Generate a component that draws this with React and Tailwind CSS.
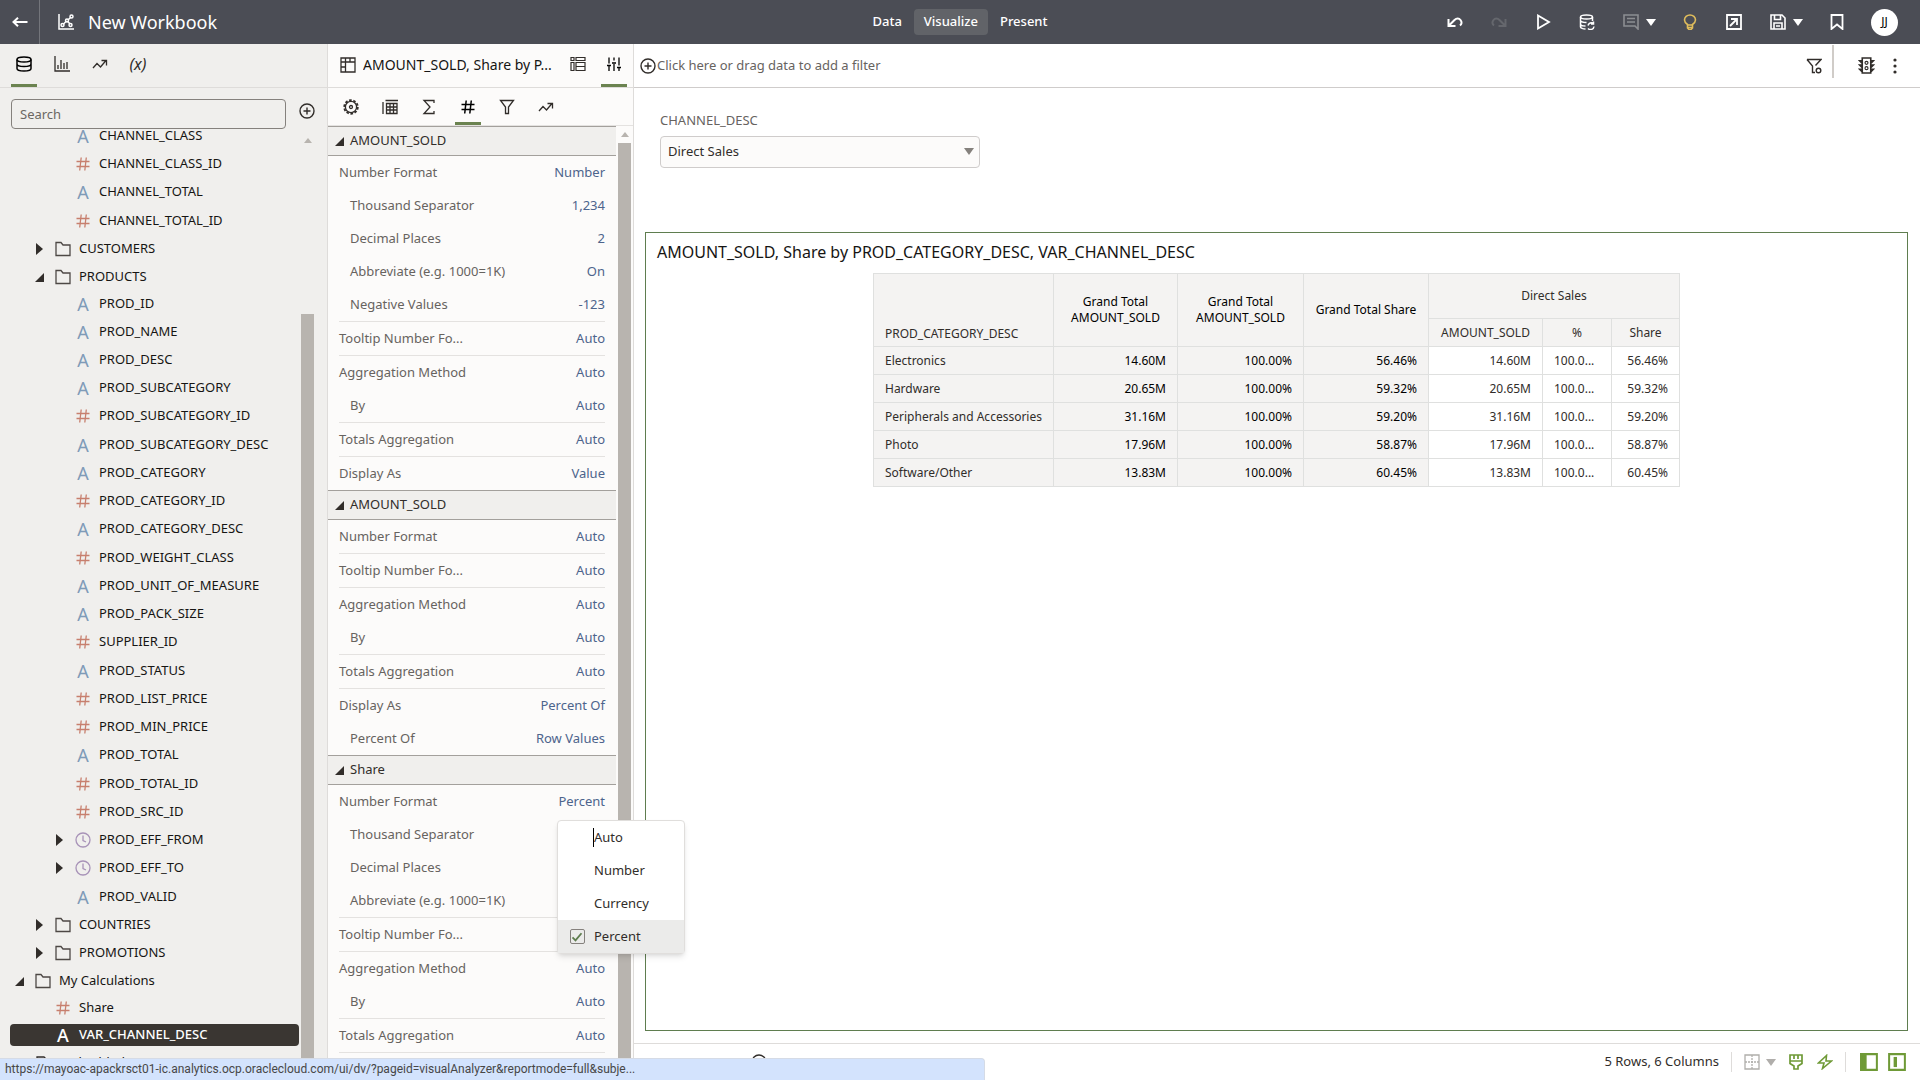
import { useState } from 'react'

const tree = [
  { level: 2, kind: 'text', label: 'CHANNEL_CLASS' },
  { level: 2, kind: 'number', label: 'CHANNEL_CLASS_ID' },
  { level: 2, kind: 'text', label: 'CHANNEL_TOTAL' },
  { level: 2, kind: 'number', label: 'CHANNEL_TOTAL_ID' },
  { level: 1, kind: 'folder', label: 'CUSTOMERS', arrow: 'closed' },
  { level: 1, kind: 'folder', label: 'PRODUCTS', arrow: 'open' },
  { level: 2, kind: 'text', label: 'PROD_ID', first: true },
  { level: 2, kind: 'text', label: 'PROD_NAME' },
  { level: 2, kind: 'text', label: 'PROD_DESC' },
  { level: 2, kind: 'text', label: 'PROD_SUBCATEGORY' },
  { level: 2, kind: 'number', label: 'PROD_SUBCATEGORY_ID' },
  { level: 2, kind: 'text', label: 'PROD_SUBCATEGORY_DESC' },
  { level: 2, kind: 'text', label: 'PROD_CATEGORY' },
  { level: 2, kind: 'number', label: 'PROD_CATEGORY_ID' },
  { level: 2, kind: 'text', label: 'PROD_CATEGORY_DESC' },
  { level: 2, kind: 'number', label: 'PROD_WEIGHT_CLASS' },
  { level: 2, kind: 'text', label: 'PROD_UNIT_OF_MEASURE' },
  { level: 2, kind: 'text', label: 'PROD_PACK_SIZE' },
  { level: 2, kind: 'number', label: 'SUPPLIER_ID' },
  { level: 2, kind: 'text', label: 'PROD_STATUS' },
  { level: 2, kind: 'number', label: 'PROD_LIST_PRICE' },
  { level: 2, kind: 'number', label: 'PROD_MIN_PRICE' },
  { level: 2, kind: 'text', label: 'PROD_TOTAL' },
  { level: 2, kind: 'number', label: 'PROD_TOTAL_ID' },
  { level: 2, kind: 'number', label: 'PROD_SRC_ID' },
  { level: 2, kind: 'time', label: 'PROD_EFF_FROM', arrow: 'closed' },
  { level: 2, kind: 'time', label: 'PROD_EFF_TO', arrow: 'closed' },
  { level: 2, kind: 'text', label: 'PROD_VALID' },
  { level: 1, kind: 'folder', label: 'COUNTRIES', arrow: 'closed' },
  { level: 1, kind: 'folder', label: 'PROMOTIONS', arrow: 'closed' },
  { level: 0, kind: 'folder', label: 'My Calculations', arrow: 'open' },
  { level: 1, kind: 'number', label: 'Share', first: true },
  { level: 1, kind: 'text', label: 'VAR_CHANNEL_DESC', selected: true },
  { level: 0, kind: 'file', label: 'Embedded' },
]

const sections = [
  {
    title: 'AMOUNT_SOLD',
    groups: [
      [
        ['Number Format', 'Number'],
        ['Thousand Separator', '1,234', true],
        ['Decimal Places', '2', true],
        ['Abbreviate (e.g. 1000=1K)', 'On', true],
        ['Negative Values', '-123', true],
      ],
      [['Tooltip Number Fo...', 'Auto']],
      [['Aggregation Method', 'Auto'], ['By', 'Auto', true]],
      [['Totals Aggregation', 'Auto']],
      [['Display As', 'Value']],
    ],
  },
  {
    title: 'AMOUNT_SOLD',
    groups: [
      [['Number Format', 'Auto']],
      [['Tooltip Number Fo...', 'Auto']],
      [['Aggregation Method', 'Auto'], ['By', 'Auto', true]],
      [['Totals Aggregation', 'Auto']],
      [['Display As', 'Percent Of'], ['Percent Of', 'Row Values', true]],
    ],
  },
  {
    title: 'Share',
    groups: [
      [
        ['Number Format', 'Percent'],
        ['Thousand Separator', '', true],
        ['Decimal Places', '', true],
        ['Abbreviate (e.g. 1000=1K)', '', true],
      ],
      [['Tooltip Number Fo...', '']],
      [['Aggregation Method', 'Auto'], ['By', 'Auto', true]],
      [['Totals Aggregation', 'Auto']],
    ],
  },
]

const rows = [
  ['Electronics', '14.60M', '56.46%'],
  ['Hardware', '20.65M', '59.32%'],
  ['Peripherals and Accessories', '31.16M', '59.20%'],
  ['Photo', '17.96M', '58.87%'],
  ['Software/Other', '13.83M', '60.45%'],
]

const formats = ['Auto', 'Number', 'Currency', 'Percent']

const paddings = ['pl-px', 'pl-[21px]', 'pl-[41px]']

function Icon({ children, className = 'size-4', width = 1.3 }) {
  return (
    <svg
      viewBox="0 0 16 16"
      className={`shrink-0 ${className}`}
      fill="none"
      stroke="currentColor"
      strokeWidth={width}
      aria-hidden
    >
      {children}
    </svg>
  )
}

function Caret({ className = '' }) {
  return (
    <svg viewBox="0 0 10 7" className={`h-[7px] w-2.5 shrink-0 ${className}`} fill="currentColor" aria-hidden>
      <path d="M0 0h10L5 7z" />
    </svg>
  )
}

function Hash({ className = 'size-4', width = 1.3 }) {
  return (
    <Icon className={className} width={width}>
      <path d="M6.2 1.5 4.7 14.5M11.3 1.5l-1.5 13M1.5 5.500h13M1.5 10.500h13" />
    </Icon>
  )
}

function Trend() {
  return (
    <Icon>
      <path d="M1 12l4-4.5L8.500 11l5.500-6.500M9.500 4.500h5v5" />
    </Icon>
  )
}

function PlusCircle({ className = 'size-4' }) {
  return (
    <Icon className={className} width={1.4}>
      <circle cx="8" cy="8" r="7" />
      <path d="M8 4.5v7M4.5 8h7" />
    </Icon>
  )
}

function Arrow({ state }) {
  return (
    <span className="flex w-4 shrink-0 justify-center text-[#312d2a]">
      {state === 'closed' && (
        <svg viewBox="0 0 7 12" className="h-3 w-[7px]" fill="currentColor" aria-hidden>
          <path d="M0 0l7 6-7 6z" />
        </svg>
      )}
      {state === 'open' && (
        <svg viewBox="0 0 10 10" className="size-[9px]" fill="currentColor" aria-hidden>
          <path d="M10 0v10H0z" />
        </svg>
      )}
    </span>
  )
}

function KindIcon({ kind, selected }) {
  if (kind === 'number') return <Hash className="size-4 text-[#c77f6e]" />
  if (kind === 'text') {
    return (
      <span
        className={`w-4 shrink-0 text-center text-lg leading-5 ${selected ? 'text-white' : 'text-[#7f9bb8]'}`}
        aria-hidden
      >
        A
      </span>
    )
  }
  if (kind === 'time') {
    return (
      <Icon className="size-4 text-[#a893b8]">
        <circle cx="8" cy="8" r="7" />
        <path d="M8 3.5V8.5l3 1.5" />
      </Icon>
    )
  }
  if (kind === 'file') {
    return (
      <Icon className="size-4 text-[#312d2a]">
        <path d="M2 15V2h7l5 5v8zM6 15V8h4" />
      </Icon>
    )
  }
  return (
    <Icon className="size-4 text-[#4d4845]">
      <path d="M1 14.500V1.500h5l2 2.500h7v10.500z" />
    </Icon>
  )
}

function Tab({ label, active, className = '', children }) {
  return (
    <button
      type="button"
      aria-label={label}
      className={`flex w-[26px] items-center justify-center border-b-3 ${className} ${
        active ? 'border-[#6b8350] text-black' : 'border-transparent text-[#312d2a]'
      }`}
    >
      {children}
    </button>
  )
}

function HeaderButton({ label, className = 'text-white', children }) {
  return (
    <button type="button" aria-label={label} className={`flex items-center gap-[7px] ${className}`}>
      {children}
    </button>
  )
}

function Header() {
  return (
    <header className="grid h-11 shrink-0 grid-cols-[1fr_auto_1fr] items-center bg-[#4b4d55] text-white">
      <div className="flex h-full items-center">
        <button
          type="button"
          aria-label="Back"
          className="flex h-full w-10 items-center justify-center border-r border-[#73757b]"
        >
          <Icon className="size-4" width={2}>
            <path d="M15.500 8H1.500M6 3.800L1.500 8 6 12.200" />
          </Icon>
        </button>
        <Icon className="ml-[18px] size-4" width={1.5}>
          <path d="M1 0v15h15M5.500 10l3-3M10 6l2.500-2.500M9.500 7l2.500 3" />
          <circle cx="4.500" cy="11" r="1.500" />
          <circle cx="9" cy="6.500" r="1.500" />
          <circle cx="13.500" cy="2.500" r="1.500" />
          <circle cx="12.500" cy="11" r="1.500" />
        </Icon>
        <h1 className="ml-3.5 text-lg">New Workbook</h1>
      </div>
      <nav className="flex items-center text-[13px] font-medium">
        <button type="button" className="h-[26px] px-3">Data</button>
        <button type="button" className="h-[26px] rounded bg-[#616368] px-2.5">Visualize</button>
        <button type="button" className="h-[26px] px-3">Present</button>
      </nav>
      <div className="flex items-center justify-end gap-7 pr-[22px]">
        <HeaderButton label="Undo">
          <Icon width={2}>
            <path d="M1.500 5v7h7M2 11.500L7.500 6c2-2 4.500-2 6 0s1.500 4-.5 5.500" />
          </Icon>
        </HeaderButton>
        <HeaderButton label="Redo" className="text-[#65676d]">
          <Icon width={2}>
            <path d="M14.500 5v7h-7M14 11.500L8.500 6c-2-2-4.500-2-6 0s-1.500 4 .5 5.500" />
          </Icon>
        </HeaderButton>
        <HeaderButton label="Run">
          <Icon width={1.8}>
            <path d="M3 1.500v13L14 8z" />
          </Icon>
        </HeaderButton>
        <HeaderButton label="Refresh data">
          <Icon width={1.5}>
            <ellipse cx="7.500" cy="3" rx="6" ry="2" />
            <path d="M1.500 3v10c0 1 2.500 2 5 2M13.500 3v4M1.500 6.500c0 1 2.500 2 6 2M1.500 10c0 1 2 2 5 2M14.500 9.500a3.500 3.500 0 0 0-5.500 2M9 14.500a3.500 3.500 0 0 0 6-2M14.500 7.500v2.500h-2.500" />
          </Icon>
        </HeaderButton>
        <HeaderButton label="Comments" className="-mr-0.5 text-[#8c8e92]">
          <Icon width={1.6}>
            <path d="M1 1h14v14l-3-3H1zM4 4.500h8M4 8h8" />
          </Icon>
          <Caret className="text-white" />
        </HeaderButton>
        <HeaderButton label="Insights" className="text-[#e0bd5c]">
          <Icon width={1.6}>
            <path d="M5.500 10.500C3.500 9 2.500 7.500 2.500 6a5.500 5 0 0 1 11 0c0 1.500-1 3-3 4.500v3.500l-1.500 1.500h-2l-1.500-1.500zM5.500 11h5M5.500 13.500h5" />
          </Icon>
        </HeaderButton>
        <HeaderButton label="Export">
          <Icon width={1.8}>
            <path d="M1 1h14v14H1zM4 12l6.500-6.500M5 5h6v6" />
          </Icon>
        </HeaderButton>
        <HeaderButton label="Save" className="-mr-0.5 text-white">
          <Icon width={1.6}>
            <path d="M1 1h11l3 3v11H1zM4.500 1v4.500h6V1M4 15V9h8v6M6 12h4" />
          </Icon>
          <Caret />
        </HeaderButton>
        <HeaderButton label="Bookmark" className="-mr-0.5 text-white">
          <Icon width={1.8}>
            <path d="M2.500 1h11v14L8 10.500 2.500 15z" />
          </Icon>
        </HeaderButton>
        <button type="button" className="flex size-[27px] items-center justify-center rounded-full bg-white text-xs text-black">
          JJ
        </button>
      </div>
    </header>
  )
}

function DataPanel() {
  return (
    <aside className="flex w-[328px] shrink-0 flex-col border-r border-[#dedcda] bg-[#f0efed]">
      <div className="flex h-11 shrink-0 gap-3 border-b border-[#dedcda] pl-[11px]">
        <Tab label="Data" active>
          <Icon width={1.5}>
            <ellipse cx="8" cy="3.500" rx="7" ry="2.500" />
            <path d="M1 3.500v9C1 14 4 15 8 15s7-1 7-2.500v-9M1 8c0 1.500 3 2.500 7 2.500S15 9.500 15 8" />
          </Icon>
        </Tab>
        <Tab label="Visualizations">
          <Icon>
            <path d="M1 0v15h15M4 13V9M7 13V4M10 13V7M13 13V6" />
          </Icon>
        </Tab>
        <Tab label="Analytics">
          <Trend />
        </Tab>
        <Tab label="Functions">
          <span className="text-base italic leading-4">(x)</span>
        </Tab>
      </div>
      <div className="flex h-[42px] shrink-0 items-start gap-[13px] pl-[11px] pt-[11px]">
        <input
          type="text"
          aria-label="Search"
          placeholder="Search"
          className="h-[30px] w-[275px] rounded border border-[#85817d] bg-transparent px-2 text-[13px] outline-none placeholder:text-[#6b6763]"
        />
        <button type="button" aria-label="Add data" className="mt-1">
          <PlusCircle className="size-4 text-[#312d2a]" />
        </button>
      </div>
      <div className="flex min-h-0 flex-1">
        <ul className="min-w-0 flex-1 overflow-hidden">
          {tree.map((item, i) => (
            <li
              key={item.label}
              className={`flex items-center px-2.5 ${
                i === 0 ? '-mt-2' : ''
              } ${item.first ? 'h-[26px]' : 'h-7 nth-[4n]:h-[29px]'}`}
            >
              <button
                type="button"
                className={`flex h-[22px] w-full items-center gap-2 rounded text-[13px] ${paddings[item.level]} ${
                  item.selected ? 'bg-[#3a3632] font-medium text-white' : 'text-[#161513]'
                }`}
              >
                <Arrow state={item.arrow} />
                <KindIcon kind={item.kind} selected={item.selected} />
                <span className="whitespace-nowrap">{item.label}</span>
              </button>
            </li>
          ))}
        </ul>
        <div className="-ml-2 mr-[13px] flex w-[13px] flex-col items-center">
          <svg viewBox="0 0 8 5" className="mt-2 h-[5px] w-2 text-[#b8b4af]" fill="currentColor" aria-hidden>
            <path d="M4 0l4 5H0z" />
          </svg>
          <div className="mt-[171px] w-full flex-1 bg-[#b8b4af]" />
        </div>
      </div>
    </aside>
  )
}

function FormatMenu() {
  const [value, setValue] = useState('Percent')

  return (
    <ul className="absolute -right-20 top-full z-10 mt-0.5 w-32 rounded border border-[#e0dedc] bg-white shadow-md">
      {formats.map((name) => (
        <li key={name}>
          <label
            className={`flex h-[33px] items-center gap-2 pl-[11px] text-[13px] text-[#312d2a] ${
              value === name ? 'bg-[#ebebea]' : ''
            }`}
          >
            <span className="grid size-4 place-items-center">
              <input
                type="checkbox"
                checked={value === name}
                onChange={() => setValue(name)}
                className="col-start-1 row-start-1 size-[15px] appearance-none rounded-xs border-[#85817d] checked:border"
              />
              {value === name && (
                <Icon className="pointer-events-none col-start-1 row-start-1 size-3 text-[#5f7d4f]" width={2.4}>
                  <path d="M2 8.500l4 4L14 3" />
                </Icon>
              )}
            </span>
            <span className={name === 'Auto' ? 'border-l border-black' : 'border-l border-transparent'}>
              {name}
            </span>
          </label>
        </li>
      ))}
    </ul>
  )
}

function Section({ title, groups, menu }) {
  return (
    <section>
      <button
        type="button"
        className="flex h-[30px] w-full items-center gap-1.5 border-y border-[#a3a09c] bg-[#f0efed] pl-[7px] text-[13px] text-[#312d2a]"
      >
        <svg viewBox="0 0 10 10" className="size-[9px]" fill="currentColor" aria-hidden>
          <path d="M10 0v10H0z" />
        </svg>
        {title}
      </button>
      <div className="divide-y divide-[#e4e2e0] px-[11px]">
        {groups.map((group) => (
          <div key={group[0][0]}>
            {group.map(([label, value, sub]) => (
              <div
                key={label}
                className={`relative flex h-[33px] items-center justify-between text-[13px] ${sub ? 'pl-[11px]' : ''}`}
              >
                <span className="text-[#67635f]">{label}</span>
                {value && <button type="button" className="text-[#4d648c]">{value}</button>}
                {menu && label === 'Number Format' && <FormatMenu />}
              </div>
            ))}
          </div>
        ))}
      </div>
    </section>
  )
}

function PropertiesPanel() {
  return (
    <aside className="z-10 flex w-[306px] shrink-0 flex-col border-r border-[#dedcda] bg-[#fcfbfa]">
      <div className="flex h-11 shrink-0 border-b border-[#dedcda] pl-3 pr-1.5">
        <div className="flex min-w-0 flex-1 items-center gap-[7px] pb-0.5 text-[#312d2a]">
          <Icon>
            <path d="M1 1h14v14H1zM1 5h14M5.500 1v14M10 1v4M1 10h4.500" />
          </Icon>
          <span className="truncate text-sm text-[#161513]">AMOUNT_SOLD, Share by P...</span>
        </div>
        <div className="flex gap-2.5">
          <Tab label="Grammar">
            <Icon width={1.2}>
              <path d="M1 1.500h3v3H1zM6 1.500h9v3H6zM1 6.500h3v8H1zM6 6.500h9v8H6zM6 10.500h9" />
            </Icon>
          </Tab>
          <Tab label="Properties" active>
            <Icon>
              <path d="M3 1.500v6M3 10v5M8 1.500v3M8 8v7M13 1.500v8M13 12v3M1 9.500h4M6 7h4M11 11.500h4" />
            </Icon>
          </Tab>
        </div>
      </div>
      <div className="flex h-[38px] shrink-0 gap-[13px] border-b border-[#e4e2e0] pl-2.5">
        <Tab label="General" className="pt-1">
          <Icon width={1.3}>
            <circle cx="8" cy="8" r="6.800" strokeDasharray="2.600 1.670" strokeWidth="1.800" />
            <circle cx="8" cy="8" r="5.600" />
            <circle cx="8" cy="8" r="1.500" />
          </Icon>
        </Tab>
        <Tab label="Grid" className="pt-1">
          <Icon>
            <path d="M1 3v12M3.500 1.500H16M4.500 4.500h10.500v10H4.500zM4.500 8h10.500M4.500 11h10.500M8 4.500v10M11.500 4.500v10" />
          </Icon>
        </Tab>
        <Tab label="Totals" className="pt-1">
          <Icon>
            <path d="M13 4V1.500H3L9 8l-6 6.500h10V12" />
          </Icon>
        </Tab>
        <Tab label="Values" active className="pt-1">
          <Hash width={1.5} />
        </Tab>
        <Tab label="Filters" className="pt-1">
          <Icon>
            <path d="M1.500 1.500h13L9.500 8v6.500h-3V8z" />
          </Icon>
        </Tab>
        <Tab label="Analytics" className="pt-1">
          <Trend />
        </Tab>
      </div>
      <div className="flex min-h-0 flex-1">
        <div className="h-0 min-w-0 flex-1">
          {sections.map((section, i) => (
            <Section key={i} {...section} menu={section.title === 'Share'} />
          ))}
          <div className="mx-[11px] border-t border-[#e4e2e0]" />
        </div>
        <div className="mx-0.5 flex w-[13px] flex-col items-center">
          <svg viewBox="0 0 8 5" className="mt-1.5 h-[5px] w-2 text-[#b8b4af]" fill="currentColor" aria-hidden>
            <path d="M4 0l4 5H0z" />
          </svg>
          <div className="mt-1.5 w-full flex-1 bg-[#b8b4af]" />
        </div>
      </div>
    </aside>
  )
}

function FilterBar() {
  return (
    <div className="flex h-11 shrink-0 items-center border-b border-[#cfcccb] pl-1.5 pr-[17px] text-[#312d2a]">
      <button type="button" className="flex items-center gap-px text-[13px] text-[#67635f]">
        <PlusCircle className="size-4 text-[#312d2a]" />
        Click here or drag data to add a filter
      </button>
      <div className="ml-auto flex h-full items-center">
        <button type="button" aria-label="Filter options">
          <Icon width={1.4}>
            <path d="M1 1.500h14L9.500 7.500M1 1.500L6.500 8v6.500H9" />
            <circle cx="12.500" cy="12.500" r="2.300" />
          </Icon>
        </button>
        <div className="mb-2 ml-2.5 h-[33px] w-0.5 bg-[#d0ccc8]" />
        <button type="button" aria-label="Canvas performance" className="ml-6">
          <Icon className="size-[17px]" width={1.5}>
            <path d="M4 1h8v14H4zM4 3.500H1.500L4 6M4 7.500H1.500L4 10M4 11.500H1.500L4 14M12 3.500h2.500L12 6M12 7.500h2.500L12 10M12 11.500h2.500L12 14" />
            <circle cx="8" cy="5.500" r="1.400" strokeWidth="1.100" />
            <circle cx="8" cy="10.500" r="1.400" strokeWidth="1.100" />
          </Icon>
        </button>
        <button type="button" aria-label="More" className="ml-3">
          <svg viewBox="0 0 16 16" className="size-4" fill="currentColor" aria-hidden>
            <circle cx="8" cy="2" r="1.600" />
            <circle cx="8" cy="8" r="1.600" />
            <circle cx="8" cy="14" r="1.600" />
          </svg>
        </button>
      </div>
    </div>
  )
}

function PivotTable() {
  const cell = 'border border-[#dfe0df] px-[11px]'

  return (
    <table className="mx-auto table-fixed border-collapse text-xs text-[#312d2a]">
      <colgroup>
        <col className="w-[180px]" />
        <col className="w-[124px]" />
        <col className="w-[126px]" />
        <col className="w-[125px]" />
        <col className="w-[114px]" />
        <col className="w-[69px]" />
        <col className="w-[68px]" />
      </colgroup>
      <thead className="bg-[#f4f3f2]">
        <tr className="h-[45px]">
          <th rowSpan={2} className={`${cell} pb-1 text-left align-bottom font-normal`}>
            PROD_CATEGORY_DESC
          </th>
          <th rowSpan={2} className={`${cell} font-normal text-black`}>
            Grand Total
            <br />
            AMOUNT_SOLD
          </th>
          <th rowSpan={2} className={`${cell} font-normal text-black`}>
            Grand Total
            <br />
            AMOUNT_SOLD
          </th>
          <th rowSpan={2} className="whitespace-nowrap border border-[#dfe0df] font-normal text-black">
            Grand Total Share
          </th>
          <th colSpan={3} className={`${cell} font-normal`}>Direct Sales</th>
        </tr>
        <tr className="h-7">
          <th className={`${cell} font-normal`}>AMOUNT_SOLD</th>
          <th className={`${cell} font-normal`}>%</th>
          <th className={`${cell} font-normal`}>Share</th>
        </tr>
      </thead>
      <tbody>
        {rows.map(([name, amount, share]) => (
          <tr key={name} className="h-7 text-right">
            <th className={`${cell} whitespace-nowrap bg-[#f4f3f2] text-left font-normal`}>{name}</th>
            <td className={`${cell} bg-[#f4f3f2] text-black`}>{amount}</td>
            <td className={`${cell} bg-[#f4f3f2] text-black`}>100.00%</td>
            <td className={`${cell} bg-[#f4f3f2] text-black`}>{share}</td>
            <td className={cell}>{amount}</td>
            <td className={`${cell} text-left`}>100.0...</td>
            <td className={cell}>{share}</td>
          </tr>
        ))}
      </tbody>
    </table>
  )
}

function Footer() {
  return (
    <footer className="flex h-[37px] shrink-0 items-center border-t border-[#dedcda] pl-[117px] pr-3.5">
      <button type="button" aria-label="Add canvas">
        <PlusCircle className="size-4 text-[#312d2a]" />
      </button>
      <span className="ml-auto text-[13px] text-[#312d2a]">5 Rows, 6 Columns</span>
      <div className="ml-3 h-5 w-px bg-[#dedcda]" />
      <button type="button" aria-label="Canvas layout" className="ml-3 flex items-center gap-1.5 text-[#b0aeab]">
        <Icon>
          <path d="M1 1h14v14H1z" />
          <path d="M8 1v14M1 8h14" strokeDasharray="2 1" />
        </Icon>
        <Caret />
      </button>
      <div className="ml-3 flex items-center gap-[13px] text-[#6f9a37]">
        <button type="button" aria-label="Brushing">
          <Icon width={1.7}>
            <path d="M2 1h12v8.500L10 12v3H6v-3L2 9.500zM2 7h12M6 1v4M10 1v4" />
          </Icon>
        </button>
        <button type="button" aria-label="Auto apply">
          <Icon width={1.6}>
            <path d="M9.500 1.500L1.500 9h5.500L5.500 14.500 14.500 7H9z" />
          </Icon>
        </button>
      </div>
      <div className="ml-3 h-5 w-px bg-[#dedcda]" />
      <div className="ml-3.5 flex items-center gap-2.5 text-[#6f9a37]">
        <button type="button" aria-label="Toggle data panel">
          <Icon className="size-[18px]" width={1.8}>
            <path d="M1 1h14v14H1z" />
            <path d="M1 1h4v14H1z" fill="currentColor" />
          </Icon>
        </button>
        <button type="button" aria-label="Toggle properties panel">
          <Icon className="size-[18px]" width={1.8}>
            <path d="M1 1h14v14H1z" />
            <path d="M6.500 3.500v9" strokeWidth="3" />
          </Icon>
        </button>
      </div>
    </footer>
  )
}

export default function App() {
  return (
    <div className="relative flex h-screen flex-col overflow-hidden bg-white font-['Noto_Sans',sans-serif]">
      <Header />
      <div className="flex min-h-0 flex-1">
        <DataPanel />
        <PropertiesPanel />
        <main className="flex min-w-0 flex-1 flex-col">
          <FilterBar />
          <div className="flex min-h-0 flex-1 flex-col pb-3 pl-[11px] pr-3">
            <div className="pl-[15px] pt-[22px]">
              <label htmlFor="channel" className="block text-[13px] leading-5 text-[#67635f]">
                CHANNEL_DESC
              </label>
              <div className="relative mt-1.5 w-80">
                <select
                  id="channel"
                  className="h-8 w-full appearance-none rounded border border-[#cfcccb] bg-[#fcfbfa] px-[7px] text-[13px] text-[#312d2a]"
                >
                  <option>Direct Sales</option>
                </select>
                <Caret className="pointer-events-none absolute right-1.5 top-3 text-[#85817d]" />
              </div>
            </div>
            <section className="mt-16 min-h-0 flex-1 border border-[#5f7d4f] bg-white">
              <h2 className="px-[11px] pb-2.5 pt-2 text-base leading-[22px] text-[#161513]">
                AMOUNT_SOLD, Share by PROD_CATEGORY_DESC, VAR_CHANNEL_DESC
              </h2>
              <PivotTable />
            </section>
          </div>
          <Footer />
        </main>
      </div>
      <div className="absolute bottom-0 left-0 z-20 h-[22px] w-[985px] rounded-tr border-r border-t border-[#d5dbe6] bg-[#d3e3fd] pl-[5px] font-['Roboto','Noto_Sans',sans-serif] text-xs leading-[21px] text-[#474747]">
        https://mayoac-apackrsct01-ic.analytics.ocp.oraclecloud.com/ui/dv/?pageid=visualAnalyzer&amp;reportmode=full&amp;subje...
      </div>
    </div>
  )
}
